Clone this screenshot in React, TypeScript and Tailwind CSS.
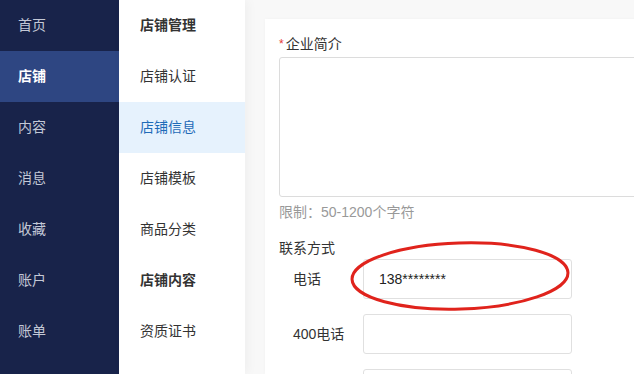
import React from 'react';

const mainNav = ['首页', '店铺', '内容', '消息', '收藏', '账户', '账单'];

const subNav: { label: string; header?: boolean; active?: boolean }[] = [
  { label: '店铺管理', header: true },
  { label: '店铺认证' },
  { label: '店铺信息', active: true },
  { label: '店铺模板' },
  { label: '商品分类' },
  { label: '店铺内容', header: true },
  { label: '资质证书' },
];

const FormRow: React.FC<{ label: string; value?: string }> = ({ label, value }) => (
  <div className="flex items-center pl-[14px]">
    <div className="w-[70px] text-[14px] text-[#333]">{label}</div>
    <div className="flex h-[40px] w-[209px] items-center rounded-[3px] border border-[#e0e0e0] bg-white px-[15px] text-[14px] text-[#222]">
      {value}
    </div>
  </div>
);

export default function App() {
  return (
    <div
      className="relative flex h-[374px] w-[634px] overflow-hidden bg-white"
      style={{ fontFamily: '"Liberation Sans", "Noto Sans CJK SC", sans-serif' }}
    >
      {/* main nav */}
      <div className="flex w-[119px] shrink-0 flex-col bg-[#18234a]">
        {mainNav.map((item) => (
          <div
            key={item}
            className={
              item === '店铺'
                ? 'flex h-[51px] items-center bg-[#2e4682] pl-[18px] text-[14px] font-bold text-white'
                : 'flex h-[51px] items-center pl-[18px] text-[14px] text-[#c3c8d6]'
            }
          >
            {item}
          </div>
        ))}
      </div>

      {/* sub nav */}
      <div className="relative z-10 flex w-[126px] shrink-0 flex-col bg-white shadow-[3px_0_10px_rgba(0,0,0,0.04)]">
        {subNav.map((item) => (
          <div
            key={item.label}
            className={
              item.active
                ? 'flex h-[51px] items-center bg-[#e6f2fd] pl-[21px] text-[14px] text-[#1f6bb8]'
                : item.header
                ? 'flex h-[51px] items-center pl-[21px] text-[14px] font-bold text-[#333]'
                : 'flex h-[51px] items-center pl-[21px] text-[14px] text-[#333]'
            }
          >
            {item.label}
          </div>
        ))}
      </div>

      {/* content */}
      <div className="flex-1 bg-[#f8f8f8] pl-[20px] pt-[19px]">
        <div className="h-full w-[420px] bg-white pl-[14px] pt-[15px] shadow-[0_0_4px_rgba(0,0,0,0.03)]">
          <div className="flex h-[20px] items-center text-[14px] text-[#333]">
            <span className="mr-[2px] text-[12px] text-[#e53935]">*</span>
            企业简介
          </div>
          <div className="mt-[3px] h-[140px] w-[400px] rounded-[3px] border border-[#dcdcdc] bg-white" />
          <div className="mt-[5px] h-[20px] text-[14px] leading-[20px] text-[#999]">限制：50-1200个字符</div>
          <div className="mt-[16px] h-[20px] text-[14px] leading-[20px] text-[#333]">联系方式</div>
          <div className="mt-[1px] flex flex-col gap-[15px]">
            <FormRow label="电话" value="138********" />
            <FormRow label="400电话" />
            <FormRow label="" />
          </div>
        </div>
      </div>

      {/* red annotation */}
      <svg className="pointer-events-none absolute left-[345px] top-[236px]" width="230" height="80" viewBox="0 0 230 80">
        <ellipse
          cx="115"
          cy="40"
          rx="108"
          ry="33"
          fill="none"
          stroke="#e0231c"
          strokeWidth="3"
          transform="rotate(-1.8 115 40)"
        />
      </svg>
    </div>
  );
}
